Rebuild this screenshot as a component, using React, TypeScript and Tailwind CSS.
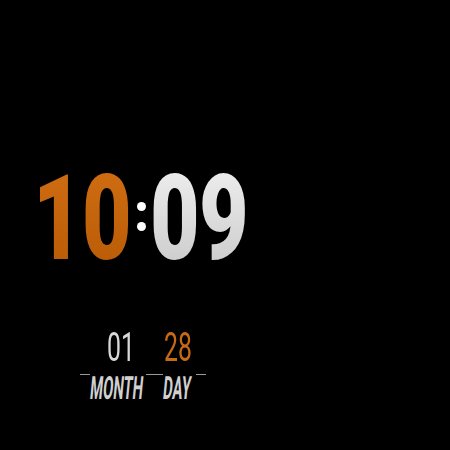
import React from "react";

export default function App() {
  const roboto = { fontFamily: "Roboto, 'Liberation Sans', sans-serif" };
  return (
    <div className="w-[450px] h-[450px] bg-black overflow-hidden" style={roboto}>
      {/* time */}
      <div className="pt-[159px] pl-[33px] flex items-start">
        <div className="w-[99px] h-[120px]">
          <span className="inline-block origin-top-left scale-x-[0.72] text-[119px] leading-none font-black bg-gradient-to-b from-[#d06e12] to-[#b85a06] bg-clip-text text-transparent tracking-[-1px]">
            10
          </span>
        </div>
        <div className="w-[18px] h-[120px] flex flex-col items-center pt-[43px] gap-[11px]">
          <div className="w-[9px] h-[9px] rounded-full bg-white" />
          <div className="w-[9px] h-[9px] rounded-full bg-white" />
        </div>
        <div className="w-[98px] h-[120px]">
          <span className="inline-block origin-top-left scale-x-[0.72] text-[119px] leading-none font-black bg-gradient-to-b from-[#f0f0f0] to-[#c9c9c9] bg-clip-text text-transparent tracking-[-1px]">
            09
          </span>
        </div>
      </div>
      {/* date */}
      <div className="mt-[49px] flex">
        <div className="ml-[107px] w-[57px] h-[40px]">
          <span className="inline-block origin-top-left scale-x-[0.62] text-[40px] leading-none font-normal text-[#d8d8d8]">01</span>
        </div>
        <div className="w-[60px] h-[40px]">
          <span className="inline-block origin-top-left scale-x-[0.62] text-[40px] leading-none font-normal text-[#c86a14]">28</span>
        </div>
      </div>
      <div className="mt-[4px] flex items-start">
        <div className="ml-[80px] mt-[2px] w-[10px] h-[1px] bg-[#9a9a9a]" />
        <div className="ml-[2px] w-[54px] h-[32px]">
          <span className="inline-block origin-top-left scale-x-[0.46] -skew-x-12 text-[32px] leading-none font-bold text-[#d0d0d0]">MONTH</span>
        </div>
        <div className="mt-[2px] w-[17px] h-[1px] bg-[#9a9a9a]" />
        <div className="ml-[2px] w-[31px] h-[32px]">
          <span className="inline-block origin-top-left scale-x-[0.46] -skew-x-12 text-[32px] leading-none font-bold text-[#d0d0d0]">DAY</span>
        </div>
        <div className="mt-[2px] w-[10px] h-[1px] bg-[#9a9a9a]" />
      </div>
    </div>
  );
}
